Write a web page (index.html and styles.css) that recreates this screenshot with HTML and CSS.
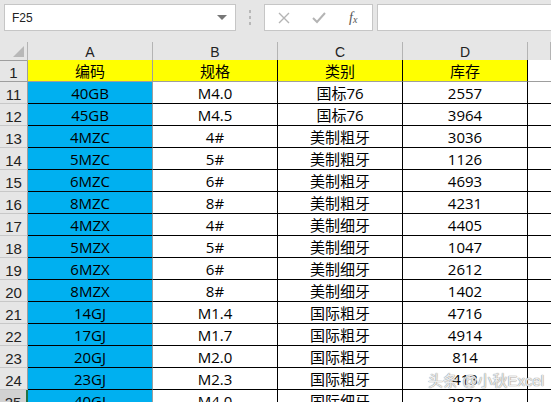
FILE: index.html
```html
<!DOCTYPE html>
<html>
<head>
<meta charset="utf-8">
<link rel="stylesheet" href="styles.css">
</head>
<body>
<div class="app">
  <div class="bar">
    <div class="namebox"><span class="nb-text">F25</span><span class="nb-arrow"></span></div>
    <div class="dots"><i></i><i></i><i></i></div>
    <div class="btns">
      <svg class="ico" width="14" height="14" viewBox="0 0 14 14"><path d="M2 2 L12 12 M12 2 L2 12" stroke="#b4b4b4" stroke-width="1.4" fill="none"/></svg>
      <svg class="ico" width="16" height="14" viewBox="0 0 16 14"><path d="M2 7 L6 11 L14 2" stroke="#b4b4b4" stroke-width="2" fill="none"/></svg>
      <span class="fx">f<sub>x</sub></span>
    </div>
    <div class="formula"></div>
  </div>
  <div class="sheet">
    <div class="row colhead">
      <div class="rh corner"><span class="tri"></span></div>
      <div class="c">A</div><div class="c">B</div><div class="c">C</div><div class="c">D</div><div class="c e"></div>
    </div>
    <div class="row r1">
      <div class="rh">1</div>
      <div class="c ya">编码</div><div class="c yb">规格</div><div class="c yb">类别</div><div class="c yb">库存</div><div class="c e"></div>
    </div>
    <div class="row d"><div class="rh">11</div><div class="c a">40GB</div><div class="c b">M4.0</div><div class="c b">国标76</div><div class="c b">2557</div><div class="c e"></div></div>
    <div class="row d"><div class="rh">12</div><div class="c a">45GB</div><div class="c b">M4.5</div><div class="c b">国标76</div><div class="c b">3964</div><div class="c e"></div></div>
    <div class="row d"><div class="rh">13</div><div class="c a">4MZC</div><div class="c b">4#</div><div class="c b">美制粗牙</div><div class="c b">3036</div><div class="c e"></div></div>
    <div class="row d"><div class="rh">14</div><div class="c a">5MZC</div><div class="c b">5#</div><div class="c b">美制粗牙</div><div class="c b">1126</div><div class="c e"></div></div>
    <div class="row d"><div class="rh">15</div><div class="c a">6MZC</div><div class="c b">6#</div><div class="c b">美制粗牙</div><div class="c b">4693</div><div class="c e"></div></div>
    <div class="row d"><div class="rh">16</div><div class="c a">8MZC</div><div class="c b">8#</div><div class="c b">美制粗牙</div><div class="c b">4231</div><div class="c e"></div></div>
    <div class="row d"><div class="rh">17</div><div class="c a">4MZX</div><div class="c b">4#</div><div class="c b">美制细牙</div><div class="c b">4405</div><div class="c e"></div></div>
    <div class="row d"><div class="rh">18</div><div class="c a">5MZX</div><div class="c b">5#</div><div class="c b">美制细牙</div><div class="c b">1047</div><div class="c e"></div></div>
    <div class="row d"><div class="rh">19</div><div class="c a">6MZX</div><div class="c b">6#</div><div class="c b">美制细牙</div><div class="c b">2612</div><div class="c e"></div></div>
    <div class="row d"><div class="rh">20</div><div class="c a">8MZX</div><div class="c b">8#</div><div class="c b">美制细牙</div><div class="c b">1402</div><div class="c e"></div></div>
    <div class="row d"><div class="rh">21</div><div class="c a">14GJ</div><div class="c b">M1.4</div><div class="c b">国际粗牙</div><div class="c b">4716</div><div class="c e"></div></div>
    <div class="row d"><div class="rh">22</div><div class="c a">17GJ</div><div class="c b">M1.7</div><div class="c b">国际粗牙</div><div class="c b">4914</div><div class="c e"></div></div>
    <div class="row d"><div class="rh">23</div><div class="c a">20GJ</div><div class="c b">M2.0</div><div class="c b">国际粗牙</div><div class="c b">814</div><div class="c e"></div></div>
    <div class="row d"><div class="rh">24</div><div class="c a">23GJ</div><div class="c b">M2.3</div><div class="c b">国际粗牙</div><div class="c b">413</div><div class="c e"></div></div>
    <div class="row d"><div class="rh sel">25</div><div class="c a">40GJ</div><div class="c b">M4.0</div><div class="c b">国际细牙</div><div class="c b">2872</div><div class="c e"></div></div>
  </div>
  <div class="wm">头条 @小秋Excel</div>
</div>
</body>
</html>
```
FILE: styles.css
```css
* { box-sizing: border-box; }
html, body { margin: 0; padding: 0; }
body {
  width: 551px;
  height: 402px;
  overflow: hidden;
  background: #e6e6e6;
  font-family: "Open Sans", "Noto Sans CJK SC", sans-serif;
  color: #000;
}
.app { position: relative; width: 551px; height: 402px; overflow: hidden; }
.bar {
  height: 42px;
  display: flex;
  align-items: flex-start;
  padding-top: 4px;
  padding-left: 4px;
}
.namebox {
  width: 232px;
  height: 27px;
  background: #fff;
  border: 1px solid #c6c6c6;
  display: flex;
  align-items: center;
  justify-content: space-between;
  padding: 0 8px 0 7px;
  font-family: "Liberation Sans", sans-serif;
  font-size: 12px;
  color: #222;
}
.nb-arrow {
  width: 0; height: 0;
  border-left: 5px solid transparent;
  border-right: 5px solid transparent;
  border-top: 5px solid #777;
}
.dots {
  width: 28px;
  height: 27px;
  display: flex;
  flex-direction: column;
  align-items: center;
  justify-content: center;
  gap: 3px;
}
.dots i { display: block; width: 2px; height: 3px; background: #b8b8b8; }
.btns {
  width: 109px;
  height: 27px;
  background: #fff;
  border: 1px solid #c6c6c6;
  display: flex;
  align-items: center;
  padding-left: 12px;
  gap: 20px;
}
.fx {
  font-family: "Liberation Serif", serif;
  font-style: italic;
  font-size: 14px;
  color: #555;
  margin-left: 2px;
}
.fx sub { font-size: 10px; vertical-align: -1px; }
.formula {
  margin-left: 4px;
  flex: 1;
  height: 27px;
  background: #fff;
  border: 1px solid #c6c6c6;
  border-right: none;
}
.sheet { background: #fff; }
.row {
  display: grid;
  grid-template-columns: 28px 125px 125px 125px 125px 23px;
  height: 22px;
}
.row.colhead { height: 18px; background: #e6e6e6; }
.c, .rh {
  display: flex;
  align-items: center;
  justify-content: center;
  font-size: 15px;
  white-space: nowrap;
}
.rh {
  background: #e6e6e6;
  color: #222;
  border-right: 1px solid #9e9e9e;
  border-bottom: 1px solid #c8c8c8;
  font-size: 15px;
  font-family: "Liberation Sans", sans-serif;
  padding-top: 4px;
}
.rh.sel { background: #d2d2d2; border-right: 2px solid #217346; }
.colhead .c {
  font-family: "Liberation Sans", sans-serif;
  font-size: 14px;
  color: #222;
  border-right: 1px solid #b4b4b4;
  border-bottom: 1px solid #9e9e9e;
  padding-top: 2px;
}
.colhead .rh { border-bottom: 1px solid #9e9e9e; border-right: 1px solid #b4b4b4; }
.corner { position: relative; }
.tri {
  position: absolute;
  right: 3px;
  bottom: 3px;
  width: 0; height: 0;
  border-left: 11px solid transparent;
  border-bottom: 11px solid #b8b8b8;
}
.r1 .rh { border-bottom: 1px solid #9e9e9e; }
.r1 .c { background: #ffff00; border-bottom: 1px solid #9e9e9e; }
.r1 .ya { border-right: 1px solid #9e9e9e; }
.r1 .yb { border-right: 1px solid #000; }
.r1 .e { background: #fff; border-right: none; }
.d .c { border-bottom: 1px solid #000; }
.d .a { background: #00b0f0; border-right: 1px solid #9e9e9e; }
.d .b { border-right: 1px solid #000; }
.d .e { border-bottom: 1px solid #000; }
.wm {
  position: absolute;
  left: 428px;
  top: 369px;
  font-family: "Liberation Sans", "Noto Sans CJK SC", sans-serif;
  font-size: 15px;
  color: rgba(255,255,255,0.85);
  text-shadow: 0 0 1px #888, 0 0 1px #888;
}
```
